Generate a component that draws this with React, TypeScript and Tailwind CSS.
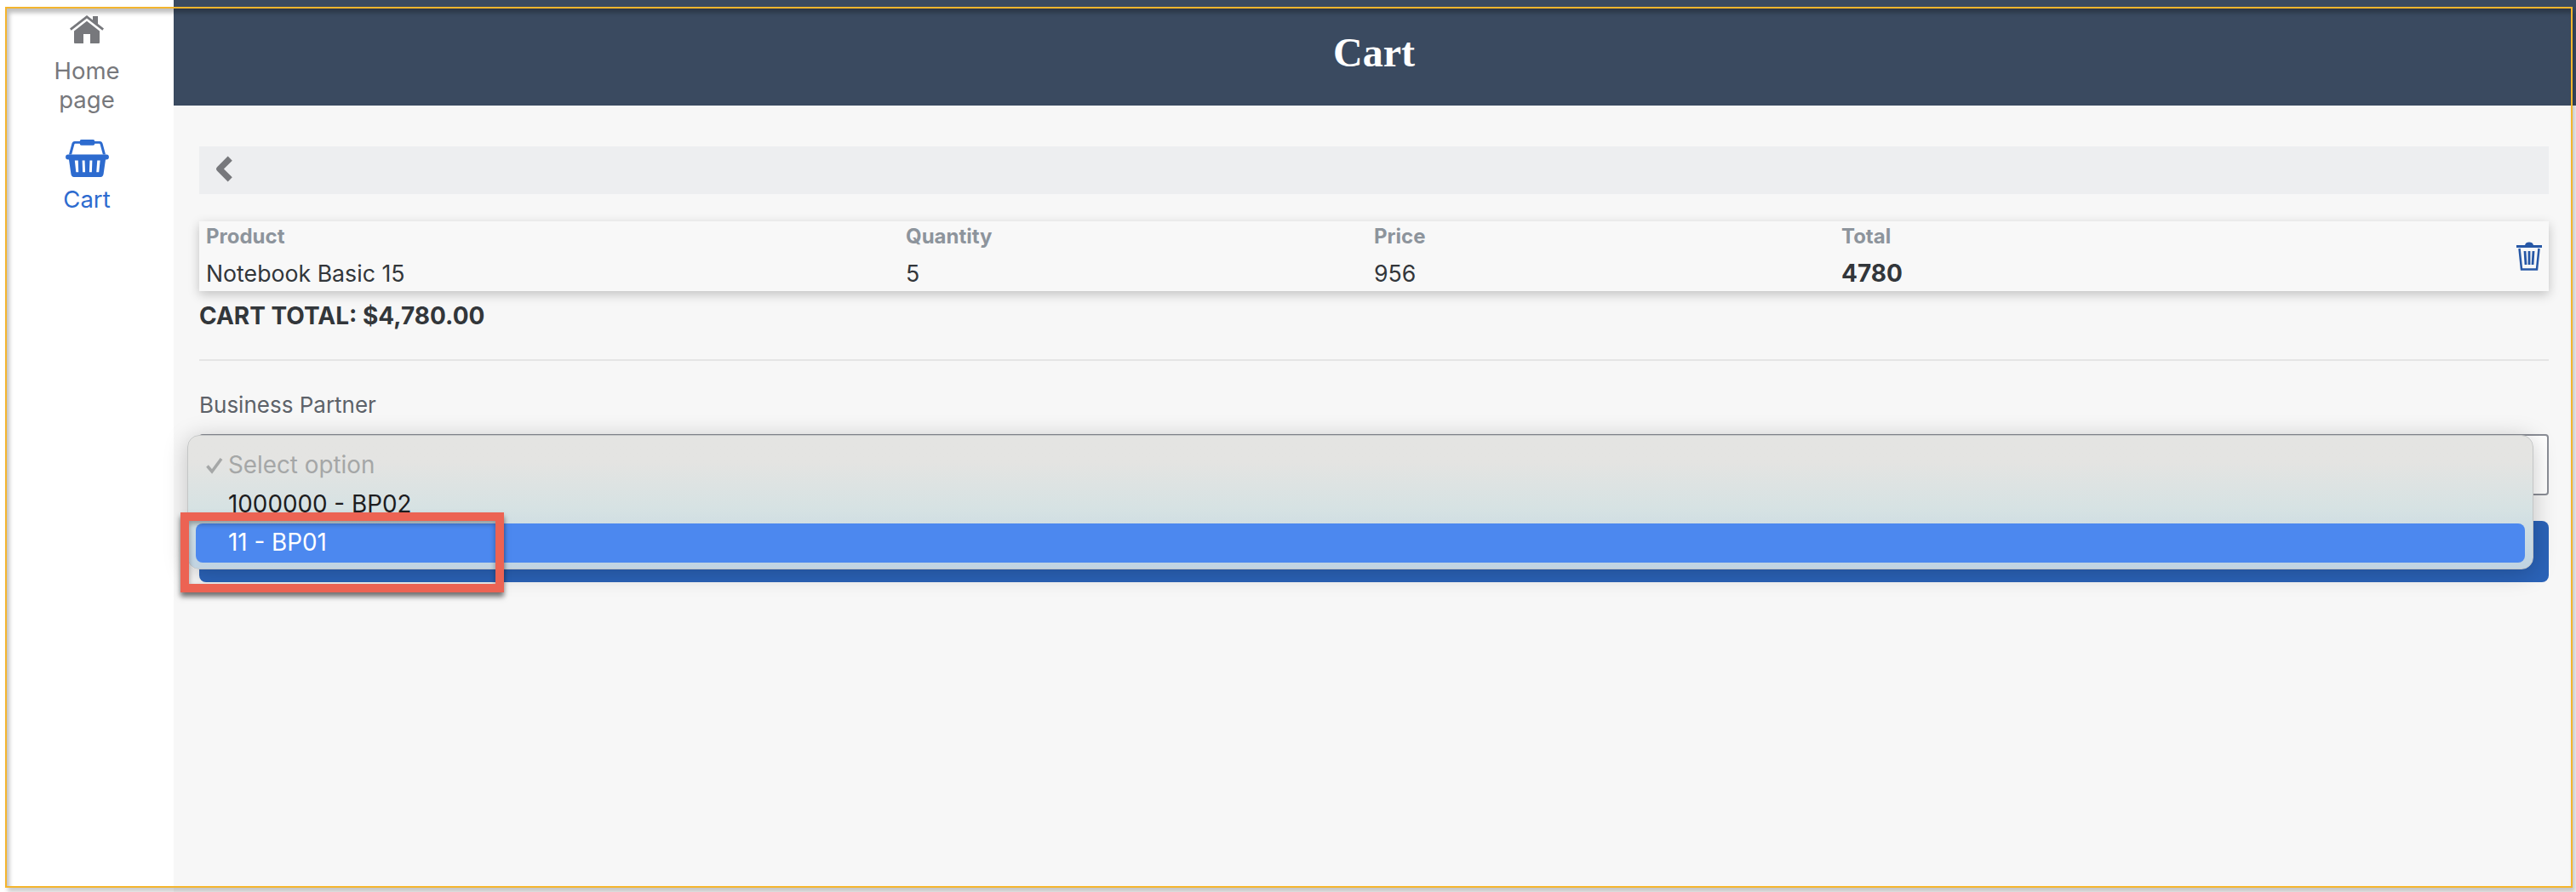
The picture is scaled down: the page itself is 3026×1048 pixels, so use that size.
import React from 'react';

const HomeIcon = () => (
  <svg viewBox="0 0 40 33" className="w-[40px] h-[33px] block" fill="#77787c">
    <path d="M0 15.500 20 0l7 5.400V1h6v9.100l7 5.400-1.700 2.200L20 3.600 1.700 17.700z" />
    <path d="M5 18.500 20 6.800l15 11.700V32a1 1 0 0 1-1 1H24V22h-8v11H6a1 1 0 0 1-1-1z" />
  </svg>
);

const BasketIcon = () => (
  <svg viewBox="0 0 52 46" className="w-[51px] h-[45px] block" fill="#2d6bcf">
    <path d="M19 1h14a2 2 0 0 1 2 2h6c2 0 3 1 3.500 3l3.500 13h-3.200L41.500 7c-.2-.8-.6-1-1.200-1H35a2 2 0 0 1-2 2H19a2 2 0 0 1-2-2h-5.300c-.6 0-1 .2-1.200 1L7.200 19H4L7.500 6C8 4 9 3 11 3h6a2 2 0 0 1 2-2z" />
    <path fillRule="evenodd" d="M3 19h46a3 3 0 0 1 0 6h-1l-2.500 17.500c-.3 2-1.500 3.500-3.500 3.500H10c-2 0-3.200-1.500-3.500-3.500L4 25H3a3 3 0 0 1 0-6zm8 7 1.500 14h3L15 26zm9 0 .5 14h3l-.5-14zm9 0-.5 14h3l.5-14zm9 0-1 14h3l1.500-14z" />
  </svg>
);

const TrashIcon = () => (
  <svg viewBox="0 0 30 34" className="w-[30px] h-[34px] block" fill="none" stroke="#2758a6" strokeWidth="2.500">
    <path d="M0 5.500h30" strokeWidth="3" />
    <path d="M10 4c.5-2.500 2.500-3.500 5-3.500S19.500 1.500 20 4z" fill="#2758a6" stroke="none" />
    <path d="M3.500 8 6 32.500h18L26.500 8" />
    <path d="M10 11l1 16M15 11v16M20 11l-1 16" strokeWidth="2.800" />
  </svg>
);

const CheckIcon = () => (
  <svg viewBox="0 0 20 20" className="w-[20px] h-[20px] block" fill="none" stroke="#a5a7a7" strokeWidth="3.500">
    <path d="M1.500 10.500 7 17 18 2" />
  </svg>
);

export default function App() {
  return (
    <div className="relative flex w-[3026px] h-[1048px] overflow-hidden bg-[#f7f7f7] font-['Inter',sans-serif]">
      <aside className="w-[204px] shrink-0 bg-white flex flex-col items-center pt-[18px] text-[27.500px] leading-[34px]">
        <HomeIcon />
        <div className="mt-[15px] text-center text-[#77787c]">Home<br />page</div>
        <div className="mt-[29px]"><BasketIcon /></div>
        <div className="mt-[9px] text-[#2d6bcf]">Cart</div>
      </aside>

      <main className="flex-1 flex flex-col min-w-0">
        <header className="h-[124px] bg-[#3a4a60] flex items-center justify-center">
          <h1 className="font-['Liberation_Serif',serif] font-bold text-[48px] -ml-[2px] text-white">Cart</h1>
        </header>

        <div className="relative flex-1 pl-[30px] pr-[32px] pt-[48px]">
          <div className="h-[56px] bg-[#edeef0] flex items-center pl-[18px] pb-[4px]">
            <svg viewBox="0 0 20 30" className="w-[22px] h-[31px]" fill="none" stroke="#77787c" strokeWidth="7" strokeLinejoin="round">
              <path d="M17 3 5 15l12 12" />
            </svg>
          </div>

          <div className="relative mt-[32px] h-[82px] shadow-[0_4px_12px_rgba(0,0,0,0.22)] bg-[#f8f8f8] grid grid-cols-[822px_550px_549px_1fr] px-[8px] pt-[3px]">
            <div>
              <div className="text-[24px] leading-[30px] font-bold text-[#8d949c]">Product</div>
              <div className="mt-[11px] text-[26.700px] leading-[34px] text-[#32363a]">Notebook Basic 15</div>
            </div>
            <div>
              <div className="text-[24px] leading-[30px] font-bold text-[#8d949c]">Quantity</div>
              <div className="mt-[11px] text-[26.700px] leading-[34px] text-[#32363a]">5</div>
            </div>
            <div>
              <div className="text-[24px] leading-[30px] font-bold text-[#8d949c]">Price</div>
              <div className="mt-[11px] text-[26.700px] leading-[34px] text-[#32363a]">956</div>
            </div>
            <div className="flex justify-between">
              <div>
                <div className="text-[24px] leading-[30px] font-bold text-[#8d949c]">Total</div>
                <div className="mt-[11px] text-[28px] leading-[34px] font-bold text-[#32363a]">4780</div>
              </div>
              <div className="mt-[21px]"><TrashIcon /></div>
            </div>
          </div>

          <div className="mt-[12px] text-[28px] leading-[34px] font-bold text-[#32363a]">CART TOTAL: $4,780.00</div>
          <div className="mt-[34px] h-[2px] bg-[#e5e5e5]" />
          <div className="mt-[36px] text-[26px] leading-[32px] text-[#5d6269]">Business Partner</div>
          <div className="mt-[18px] h-[72px] bg-white border-2 border-[#8b8e96] rounded-[4px]" />
          <div className="mt-[30px] h-[72px] bg-[#2b63b8] rounded-[8px]" />

          <div className="absolute left-[16px] top-[387px] w-[2756px] h-[158px] rounded-[14px] border border-[#c4c6c6] bg-gradient-to-b from-[#e4e4e2] from-20% via-[#d6e2e3] via-55% to-[#c0d3e2] shadow-[0_4px_28px_rgba(0,0,0,0.22)] px-[9px]">
            <div className="flex items-center h-[46px] mt-[12px] text-[27.800px] text-[#a5a7a7]">
              <span className="w-[38px] pl-[12px]"><CheckIcon /></span>
              <span>Select option</span>
            </div>
            <div className="h-[46px] flex items-center text-[27.800px] pl-[38px] text-[#1d1d1f]">1000000 - BP02</div>
            <div className="h-[46px] -mt-[1px] flex items-center pl-[38px] text-[27.800px] text-white bg-[#4c88ef] rounded-[8px]">11 - BP01</div>
          </div>
        </div>
      </main>

      <div className="absolute left-[212px] top-[602px] w-[380px] h-[94px] border-[10px] border-[#ec6353] shadow-[0_5px_6px_rgba(0,0,0,0.55),inset_0_3px_6px_rgba(0,0,0,0.35)]" />
      <div className="absolute left-[6px] top-[8px] w-[3016px] h-[1035px] border-2 border-[#f4b52e] shadow-[inset_3px_5px_5px_rgba(0,0,0,0.25),3px_5px_5px_rgba(0,0,0,0.2)]" />
    </div>
  );
}
